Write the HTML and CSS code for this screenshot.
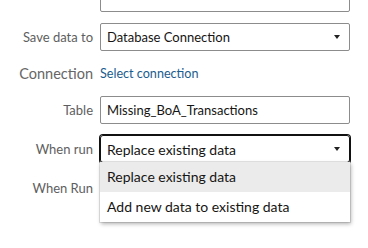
FILE: index.html
```html
<!doctype html>
<html lang="en">
  <head>
    <meta charset="UTF-8" />
    <title>Save data</title>
    <link rel="stylesheet" href="styles.css">
  </head>
  <body>
    <div class="panel">
      <div class="row row-top">
        <span class="label"></span>
        <div class="field"></div>
      </div>

      <div class="row">
        <span class="label">Save data to</span>
        <div class="field select">
          <span class="value small">Database Connection</span>
          <span class="arrow"></span>
        </div>
      </div>

      <div class="row row-connection">
        <span class="label label-big">Connection</span>
        <a class="link">Select connection</a>
      </div>

      <div class="row">
        <span class="label">Table</span>
        <div class="field">
          <span class="value small">Missing_BoA_Transactions</span>
        </div>
      </div>

      <div class="row">
        <span class="label">When run</span>
        <div class="field select focused">
          <span class="value">Replace existing data</span>
          <span class="arrow"></span>
          <!-- open list -->
          <ul class="menu">
            <li class="menu-item active">Replace existing data</li>
            <li class="menu-item">Add new data to existing data</li>
          </ul>
        </div>
      </div>

      <div class="row">
        <span class="label">When Run</span>
        <div class="field"></div>
      </div>
    </div>
  </body>
</html>
```

FILE: styles.css
```css
body {
  margin: 0;
  background: #fff;
  font-family: Lato, "Open Sans", sans-serif;
  color: #161513;
}

.panel {
  width: 368px;
  margin-top: -16px;
  padding-bottom: 20px;
}

.row {
  display: flex;
  align-items: center;
  gap: 7px;
  margin-bottom: 11px;
}

.row-connection {
  height: 22px;
  margin-top: 1px;
  margin-bottom: 12px;
}

.label {
  width: 93px;
  flex: none;
  text-align: right;
  font-size: 13px;
  color: #5e5e5e;
}

.label-big {
  font-size: 14.5px;
  color: #666;
}

.link {
  font-size: 12.6px;
  color: #1b5c8e;
  cursor: pointer;
}

.field {
  position: relative;
  width: 250px;
  height: 28px;
  box-sizing: border-box;
  border: 1px solid #8c8c8c;
  border-radius: 2px;
  display: flex;
  align-items: center;
  padding: 0 6px;
  font-size: 14px;
}

.value.small {
  font-size: 13px;
}

.select .value {
  flex: 1;
}

.arrow {
  width: 0;
  height: 0;
  margin-right: 3px;
  border-left: 3px solid transparent;
  border-right: 3px solid transparent;
  border-top: 4px solid #222;
}

.focused {
  border-color: #111;
  box-shadow: 0 0 0 1px #111;
  border-radius: 3px;
}

.menu {
  position: absolute;
  left: -1px;
  top: 100%;
  width: 250px;
  margin: 0;
  padding: 0;
  list-style: none;
  background: #fff;
  box-shadow: 0 0 0 1px rgba(0, 0, 0, 0.1), 1px 2px 4px rgba(0, 0, 0, 0.3);
  z-index: 2;
}

.menu-item {
  height: 30px;
  line-height: 30px;
  padding-left: 7px;
  font-size: 14px;
}

.menu-item.active {
  background: #ebebeb;
}
```
